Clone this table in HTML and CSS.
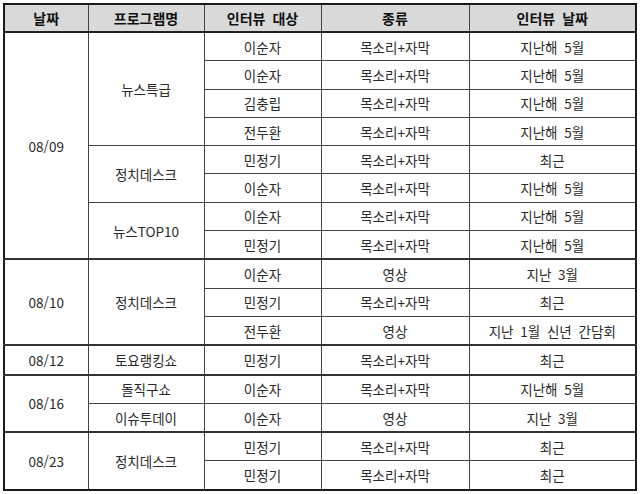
FILE: index.html
```html
<!DOCTYPE html>
<html lang="ko">
<head>
<meta charset="utf-8">
<link rel="stylesheet" href="styles.css">
</head>
<body>
<table class="sched">
<colgroup>
<col class="c1"><col class="c2"><col class="c3"><col class="c4"><col class="c5">
</colgroup>
<thead>
<tr><th>날짜</th><th>프로그램명</th><th>인터뷰 대상</th><th>종류</th><th>인터뷰 날짜</th></tr>
</thead>
<tbody>
<tr class="grp"><td rowspan="8">08/09</td><td rowspan="4">뉴스특급</td><td>이순자</td><td>목소리+자막</td><td>지난해 5월</td></tr>
<tr><td>이순자</td><td>목소리+자막</td><td>지난해 5월</td></tr>
<tr><td>김충립</td><td>목소리+자막</td><td>지난해 5월</td></tr>
<tr><td>전두환</td><td>목소리+자막</td><td>지난해 5월</td></tr>
<tr><td rowspan="2">정치데스크</td><td>민정기</td><td>목소리+자막</td><td>최근</td></tr>
<tr><td>이순자</td><td>목소리+자막</td><td>지난해 5월</td></tr>
<tr><td rowspan="2">뉴스TOP10</td><td>이순자</td><td>목소리+자막</td><td>지난해 5월</td></tr>
<tr><td>민정기</td><td>목소리+자막</td><td>지난해 5월</td></tr>
<tr class="grp"><td rowspan="3">08/10</td><td rowspan="3">정치데스크</td><td>이순자</td><td>영상</td><td>지난 3월</td></tr>
<tr><td>민정기</td><td>목소리+자막</td><td>최근</td></tr>
<tr><td>전두환</td><td>영상</td><td>지난 1월 신년 간담회</td></tr>
<tr class="grp"><td>08/12</td><td>토요랭킹쇼</td><td>민정기</td><td>목소리+자막</td><td>최근</td></tr>
<tr class="grp"><td rowspan="2">08/16</td><td>돌직구쇼</td><td>이순자</td><td>목소리+자막</td><td>지난해 5월</td></tr>
<tr><td>이슈투데이</td><td>이순자</td><td>영상</td><td>지난 3월</td></tr>
<tr class="grp"><td rowspan="2">08/23</td><td rowspan="2">정치데스크</td><td>민정기</td><td>목소리+자막</td><td>최근</td></tr>
<tr><td>민정기</td><td>목소리+자막</td><td>최근</td></tr>
</tbody>
</table>
</body>
</html>
```

FILE: styles.css
```css
html, body {
  margin: 0;
  padding: 0;
  background: #ffffff;
}
body {
  padding: 3px 0 0 3px;
  font-family: "Noto Sans CJK KR", "Noto Sans", sans-serif;
}
.sched {
  border-collapse: collapse;
  table-layout: fixed;
  width: 632px;
  border: 2px solid #1a1a1a;
}
.c1 { width: 84px; }
.c2 { width: 116px; }
.c3 { width: 117px; }
.c4 { width: 148px; }
.c5 { width: 167px; }
.sched th,
.sched td {
  border: 1px solid #444444;
  padding: 0;
  text-align: center;
  vertical-align: middle;
  font-size: 13.5px;
  line-height: 16px;
  word-spacing: 3px;
  white-space: nowrap;
}
.sched th {
  background: #d9d9d9;
  color: #111111;
  font-weight: bold;
  font-size: 14px;
  height: 26px;
  border-bottom: 2px solid #222222;
}
.sched td {
  color: #2a2a2a;
  height: 27.3px;
}
.sched tr.grp td {
  border-top: 2px solid #333333;
}
```
